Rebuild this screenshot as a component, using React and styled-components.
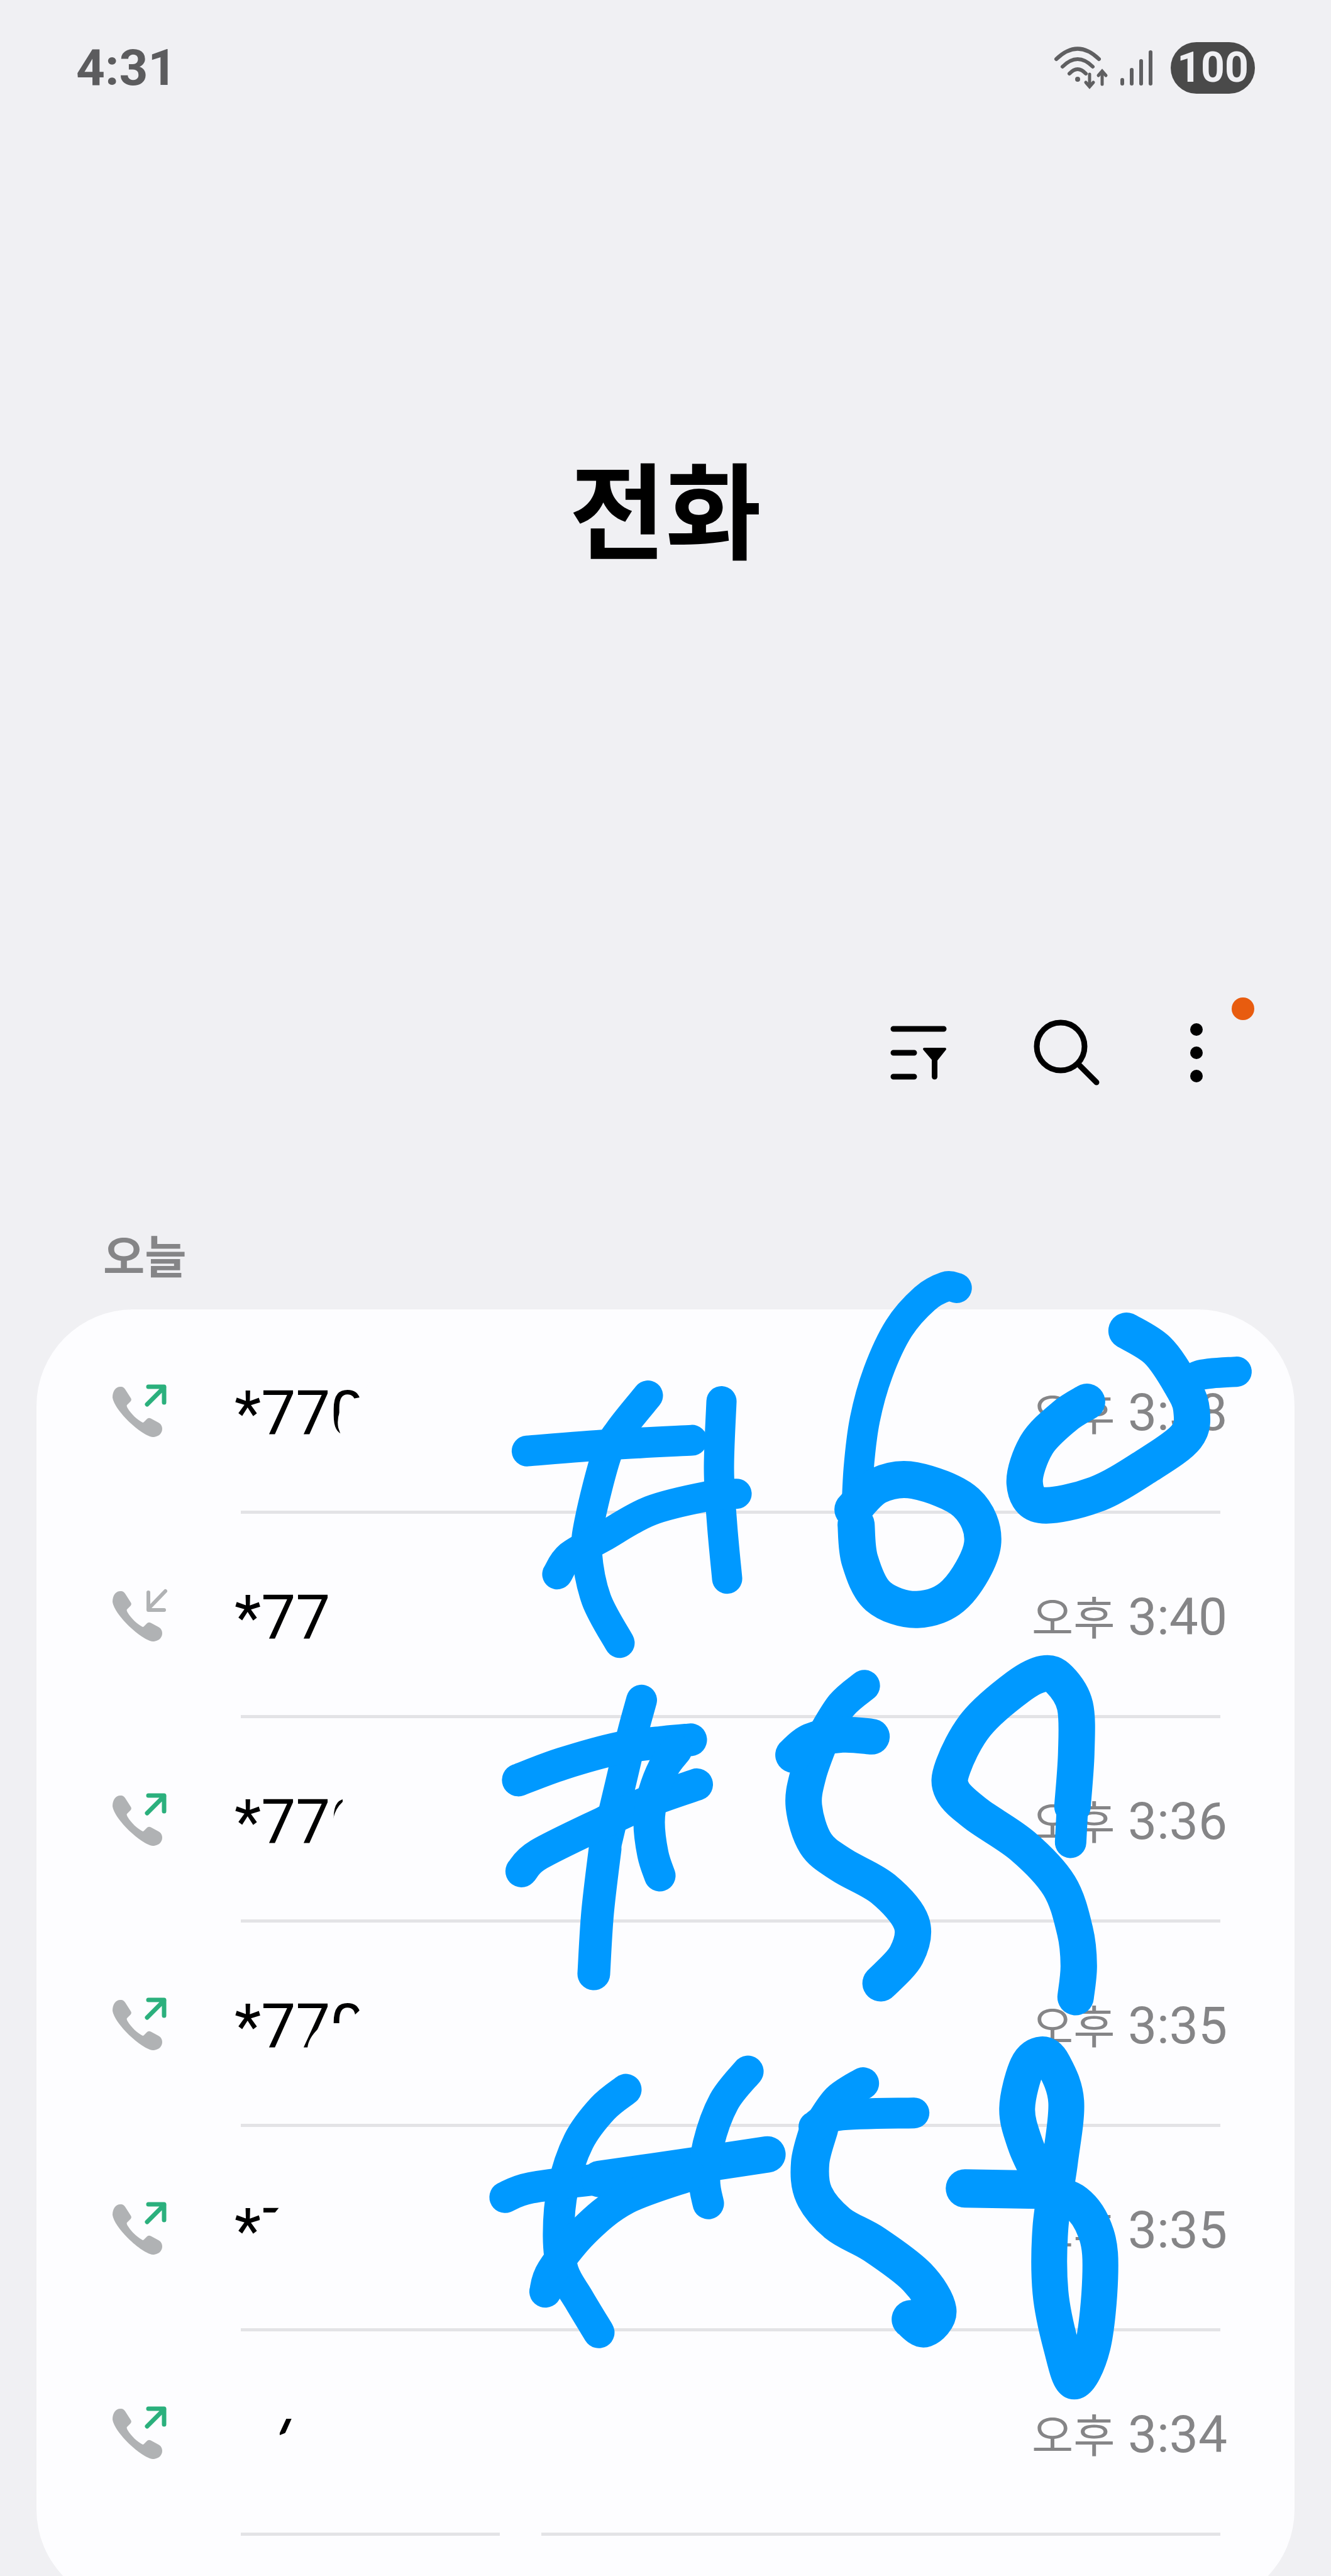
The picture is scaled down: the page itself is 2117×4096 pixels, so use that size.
import React from 'react';
import styled, { createGlobalStyle } from 'styled-components';

const GlobalStyle = createGlobalStyle`
  * {
    box-sizing: border-box;
  }

  body {
    margin: 0;
    background: #f0f0f3;
    font-family: Roboto, 'Noto Sans CJK KR', sans-serif;
  }
`;

const Screen = styled.div`
  height: 100vh;
  overflow: hidden;
  background: #f0f0f3;
`;

const StatusBar = styled.header`
  display: flex;
  align-items: center;
  justify-content: space-between;
  height: 216px;
  padding: 0 121px;
`;

const Clock = styled.time`
  font-size: 80px;
  line-height: 80px;
  font-weight: 700;
  color: #5c5c5e;
`;

const StatusIcons = styled.div`
  display: flex;
  align-items: center;
  gap: 28px;
`;

const Network = styled.div`
  display: flex;
  align-items: center;
  gap: 18px;
`;

const Battery = styled.span`
  width: 134px;
  border-radius: 42px;
  background: #4a4a4a;
  color: #f0f0f3;
  font-size: 66px;
  line-height: 82px;
  font-weight: 700;
  text-align: center;
`;

const Title = styled.h1`
  margin: 0;
  padding: 504px 0 690px;
  font-size: 166px;
  line-height: 200px;
  font-weight: 700;
  text-align: center;
  color: #000;
`;

const Toolbar = styled.nav`
  display: flex;
  justify-content: flex-end;
  gap: 100px;
  padding: 0 176px;
`;

const IconButton = styled.button`
  position: relative;
  display: flex;
  align-items: center;
  justify-content: center;
  width: ${props => props.$narrow ? '76px' : '136px'};
  height: 128px;
  padding: 0;
  border: 0;
  background: none;
  color: #000;
`;

const Badge = styled.span`
  position: absolute;
  top: -24px;
  right: -54px;
  width: 36px;
  height: 36px;
  border-radius: 50%;
  background: #e85c0f;
`;

const DayLabel = styled.h2`
  margin: 0;
  padding: 213px 164px 31px;
  font-size: 72px;
  line-height: 100px;
  font-weight: 700;
  color: #858587;
`;

const Card = styled.section`
  position: relative;
  margin: 0 58px;
  padding-bottom: 112px;
  border-radius: 154px;
  background: #fdfdff;
`;

const CallList = styled.ul`
  margin: 0;
  padding: 0;
  list-style: none;
`;

const CallRow = styled.li`
  display: flex;
  align-items: stretch;
  height: 325px;
  padding-left: 121px;
`;

const CallIcon = styled.svg`
  flex: none;
  align-self: center;
  width: 88px;
  height: 88px;
  margin-right: 116px;
`;

const CallBody = styled.div`
  position: relative;
  display: flex;
  align-items: center;
  justify-content: space-between;
  flex: 1;
  padding: 6px 107px 0 0;

  &::after {
    content: '';
    position: absolute;
    left: 0;
    right: 118px;
    bottom: 0;
    height: 5px;
    background: ${props => props.$brokenLine
      ? 'linear-gradient(to right, #e3e3e6 412px, transparent 412px 478px, #e3e3e6 478px)'
      : '#e3e3e6'};
  }
`;

const CallNumber = styled.span`
  position: relative;
  margin-left: -10px;
  font-size: 98px;
  line-height: 140px;
  color: #000;
`;

const Eraser = styled.svg`
  position: absolute;
  top: 0;
  left: 0;
  width: 280px;
  height: 140px;
  fill: #fdfdff;
  fill-rule: evenodd;
`;

const CallTime = styled.time`
  font-size: 82px;
  line-height: 100px;
  color: #858587;
`;

const Meridiem = styled.span`
  font-size: 72px;
`;

const Scribble = styled.svg`
  position: absolute;
  top: 0;
  left: 0;
  width: 100%;
  overflow: visible;
  pointer-events: none;
  fill: none;
  stroke: #0099ff;
  stroke-linecap: round;
  stroke-linejoin: round;
`;

const calls = [
  { number: '*770', time: '3:38', outgoing: true, erased: 'M215 20 L199 44 L178 48 Q161 70 165 92 L172 112 V140 H280 V20 Z' },
  { number: '*77', time: '3:40', outgoing: false },
  { number: '*770', time: '3:36', outgoing: true, erased: 'M280 20 V140 H150 V66 L157 64 Q160 48 172 37 V20 Z' },
  { number: '*770', time: '3:35', outgoing: true, erased: 'M115 120 L116 104 Q117 88 134 72 L150 64 H168 L192 50 L203 40 V20 H280 V140 H115 Z' },
  { number: '*7', time: '3:35', outgoing: true, erased: 'M40 43 H62 L71 32 V20 H150 V140 H40 Z' },
  { number: '*7', time: '3:34', outgoing: true, brokenLine: true, erased: 'M0 0 H280 V140 H0 Z M70 43 H100 V58 L72 69 Z' }
];

// Pen strokes: [width, ...points]
const strokes = [
  // #60
  [48, [972, 137], [927, 193], [906, 232], [880, 333], [875, 386], [890, 461], [927, 530]],
  [49, [780, 225], [910, 215], [1042, 208]],
  [48, [1089, 146], [1085, 254], [1090, 342], [1098, 428]],
  [48, [828, 421], [848, 392], [900, 362], [976, 320], [1067, 297], [1113, 293]],
  [48, [1463, -34], [1445, -36], [1412, -17], [1371, 30], [1338, 100], [1317, 175], [1307, 254], [1303, 342]],
  [59, [1303, 342], [1309, 399], [1338, 456], [1400, 477], [1461, 452], [1504, 373], [1478, 307], [1396, 272], [1338, 280], [1298, 318]],
  [58, [1670, 147], [1634, 170], [1590, 215], [1571, 276], [1597, 311], [1684, 294], [1766, 248], [1828, 202], [1836, 158], [1819, 118], [1782, 65], [1733, 34]],
  [48, [1819, 127], [1848, 105], [1908, 99]],
  // #59
  [49, [962, 621], [947, 676], [928, 756], [904, 857]],
  [52, [904, 857], [892, 959], [886, 1056]],
  [52, [766, 748], [836, 722], [927, 697], [997, 688], [1040, 684]],
  [51, [771, 893], [799, 866], [902, 815], [976, 781], [1050, 755]],
  [50, [1017, 701], [997, 728], [980, 773], [974, 815], [980, 866], [991, 900]],
  [58, [1248, 680], [1227, 739], [1220, 790], [1239, 849], [1280, 883], [1346, 921], [1391, 975], [1383, 1026], [1342, 1071]],
  [50, [1316, 598], [1280, 629], [1248, 680]],
  [57, [1203, 708], [1231, 686], [1280, 676], [1328, 679]],
  [50, [1644, 847], [1647, 790]],
  [58, [1647, 790], [1653, 705], [1651, 630], [1626, 588], [1601, 579], [1560, 600], [1494, 659], [1457, 727], [1456, 765], [1494, 802], [1568, 853], [1626, 916], [1651, 988], [1657, 1043], [1652, 1093]],
  // #58
  [50, [937, 1240], [900, 1270], [862, 1322], [837, 1396], [830, 1470], [837, 1528], [862, 1573], [894, 1626]],
  [50, [745, 1411], [786, 1396], [895, 1382]],
  [58, [895, 1382], [1021, 1364], [1162, 1343]],
  [50, [1131, 1211], [1093, 1259], [1068, 1327], [1062, 1385], [1068, 1421]],
  [51, [809, 1561], [820, 1528], [870, 1465], [937, 1413], [1038, 1376]],
  [51, [1314, 1230], [1274, 1256], [1244, 1299]],
  [61, [1244, 1302], [1230, 1356], [1236, 1407], [1274, 1453], [1332, 1486], [1400, 1538], [1432, 1590], [1412, 1619], [1390, 1605]],
  [49, [1236, 1299], [1274, 1281], [1395, 1277]],
  [61, [1476, 1397], [1593, 1399]],
  [57, [1593, 1399], [1652, 1419], [1685, 1470], [1691, 1539], [1679, 1648], [1650, 1704], [1629, 1648], [1612, 1562], [1612, 1459], [1627, 1356], [1637, 1259], [1617, 1200], [1598, 1184], [1575, 1203], [1559, 1270], [1572, 1327], [1593, 1373]]
];

const smoothPath = points => {
  let d = `M${points[0].join(' ')}`;
  for (let i = 0; i < points.length - 1; i++) {
    const p0 = points[i - 1] || points[i];
    const p1 = points[i];
    const p2 = points[i + 1];
    const p3 = points[i + 2] || p2;
    d += ` C${p1[0] + (p2[0] - p0[0]) / 6} ${p1[1] + (p2[1] - p0[1]) / 6}`;
    d += ` ${p2[0] - (p3[0] - p1[0]) / 6} ${p2[1] - (p3[1] - p1[1]) / 6} ${p2[0]} ${p2[1]}`;
  }
  return d;
};

const WifiIcon = () => (
  <svg width="88" height="68" viewBox="0 0 88 68" fill="none" stroke="#5f5f61" strokeWidth="6" strokeLinecap="round">
    <path d="M4 20 Q38 -13 72 20" />
    <path d="M14 32 Q38 8 62 32" />
    <path d="M25 43 Q38 29 51 43" />
    <circle cx="38" cy="52" r="4" fill="#5f5f61" stroke="none" />
    <path d="M57 44 V62 M51 57 L57 64 L63 57" strokeWidth="5" />
    <path d="M77 60 V42 M71 46 L77 39 L83 46" strokeWidth="5" />
  </svg>
);

const SignalIcon = () => (
  <svg width="52" height="58" viewBox="0 0 52 58" stroke="#5f5f61" strokeWidth="6" strokeLinecap="round">
    <path d="M3 48 V54 M18 32 V54 M33 18 V54 M48 4 V54" />
  </svg>
);

const FilterIcon = () => (
  <svg width="92" height="88" viewBox="0 0 92 88" stroke="#000" strokeWidth="9" strokeLinecap="round">
    <path d="M6 6 H86 M6 44 H39 M6 82 H39" />
    <path d="M55 38 H88 L72 58 Z" strokeWidth="4" strokeLinejoin="round" />
    <path d="M71.500 56 V82" />
  </svg>
);

const SearchIcon = () => (
  <svg width="106" height="106" viewBox="0 0 106 106" fill="none" stroke="#000" strokeWidth="9" strokeLinecap="round">
    <circle cx="43" cy="43" r="38" />
    <path d="M71 71 L100 100" />
  </svg>
);

const MoreIcon = () => (
  <svg width="20" height="94" viewBox="0 0 20 94">
    <circle cx="10" cy="10" r="10" />
    <circle cx="10" cy="47" r="10" />
    <circle cx="10" cy="84" r="10" />
  </svg>
);

const DirectionIcon = ({ outgoing }) => (
  <CallIcon viewBox="0 0 88 88" role="img" aria-label={outgoing ? '발신' : '수신'}>
    <path
      fill="#b0b2b4"
      d="M0 21 C0 11 5 4 12.500 4 C17 4 19 6 21 9.500 L29 22 C31 25 29 27 27 29 L23 33 C22 34.500 23 36 24 38 C30 48 39 56 48 61 C49 61 50 60 51 59 L55 55 C57 53.500 59 53.500 61 54.500 L73 61 C77 63 79 67 79 71 C79 79 72 84 64 84 C46 82 3 42 0 21 Z"
    />
    {outgoing ? (
      <path d="M55 32 L82 5 M57 4 H82 V29" fill="none" stroke="#2bb07d" strokeWidth="7" strokeLinecap="round" strokeLinejoin="round" />
    ) : (
      <path d="M84 4 L57 32 M57 6 V34 H82" fill="none" stroke="#b0b2b4" strokeWidth="6" strokeLinecap="round" strokeLinejoin="round" />
    )}
  </CallIcon>
);

const App = () => (
  <Screen>
    <GlobalStyle />
    <StatusBar>
      <Clock>4:31</Clock>
      <StatusIcons>
        <Network>
          <WifiIcon />
          <SignalIcon />
        </Network>
        <Battery>100</Battery>
      </StatusIcons>
    </StatusBar>
    <Title>전화</Title>
    <Toolbar>
      <IconButton aria-label="필터"><FilterIcon /></IconButton>
      <IconButton aria-label="검색"><SearchIcon /></IconButton>
      <IconButton aria-label="더보기" $narrow><MoreIcon /><Badge /></IconButton>
    </Toolbar>
    <DayLabel>오늘</DayLabel>
    <Card>
      <CallList>
        {calls.map((call, index) => (
          <CallRow key={index}>
            <DirectionIcon outgoing={call.outgoing} />
            <CallBody $brokenLine={call.brokenLine}>
              <CallNumber>
                {call.number}
                {call.erased && <Eraser viewBox="0 0 280 140"><path d={call.erased} /></Eraser>}
              </CallNumber>
              <CallTime><Meridiem>오후</Meridiem> {call.time}</CallTime>
            </CallBody>
          </CallRow>
        ))}
      </CallList>
      <Scribble viewBox="0 0 2000 2064" aria-hidden="true">
        {strokes.map(([width, ...points], index) => (
          <path key={index} d={smoothPath(points)} strokeWidth={width} />
        ))}
      </Scribble>
    </Card>
  </Screen>
);

export default App;
